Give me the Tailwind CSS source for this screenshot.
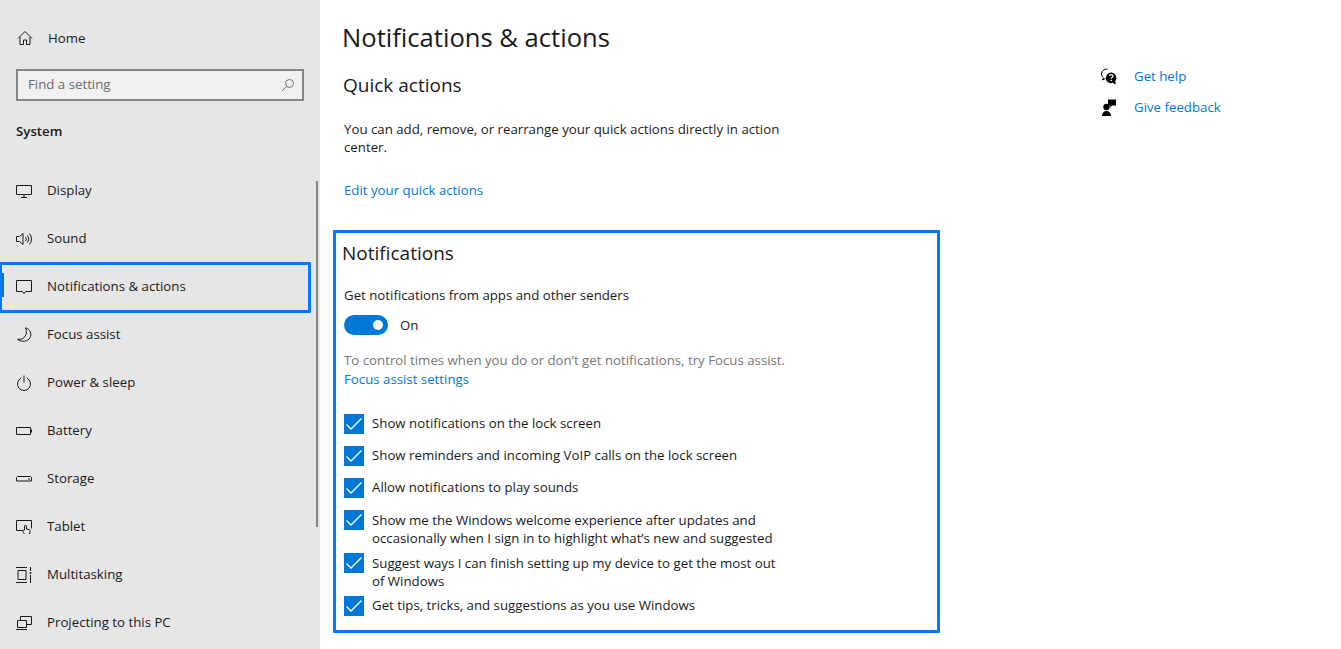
<!DOCTYPE html>
<html lang="en">
<head>
    <meta charset="UTF-8">
    <title>Settings</title>
    <script src="https://cdn.jsdelivr.net/npm/@tailwindcss/browser@4"></script>
</head>
<body class="bg-white text-[#1a1a1a] font-['Open_Sans',sans-serif] text-[13.25px] overflow-hidden">
<div class="flex h-[649px] w-[1341px] overflow-hidden">
    <!-- sidebar -->
    <aside class="relative w-[320px] shrink-0 bg-[#e6e6e6] h-[649px] overflow-hidden">
        <div class="h-[24px] mt-[26px] pl-[17px] flex items-center gap-[15px]">
            <svg class="w-[16px] h-[16px]" viewBox="0 0 16 16" fill="none" stroke="#1a1a1a"><path d="M1 8.500 8 1.500l7 7M3 7v7.500h3.500V10h3v4.500H13V7"/></svg>
            <span class="mt-[1px]">Home</span>
        </div>
        <div class="mx-[16px] mt-[19px] h-[32px] border-2 border-[#858585] bg-[#f0f0f0] flex items-center justify-between pl-[10px] pr-[7px] text-[#6d6d6d]">
            <span>Find a setting</span>
            <svg class="w-[14px] h-[14px]" viewBox="0 0 14 14" fill="none" stroke="#767676"><circle cx="8.500" cy="5.500" r="4"/><path d="M5.500 8.500 1 13"/></svg>
        </div>
        <div class="mt-[20px] pl-[16px] h-[20px] leading-[20px] font-semibold text-[#1a1a1a]">System</div>
        <nav class="mt-[26px] flex flex-col">
            <a class="h-[48px] flex items-center pl-[16px] gap-[15px]">
                <svg class="w-[16px] h-[16px]" viewBox="0 0 16 16" fill="none" stroke="#1a1a1a"><path d="M.5 2.500h15v9H.5zM8 11.500v3M5 14.500h6"/></svg>
                <span>Display</span>
            </a>
            <a class="h-[48px] flex items-center pl-[16px] gap-[15px]">
                <svg class="w-[16px] h-[16px]" viewBox="0 0 16 16" fill="none" stroke="#1a1a1a"><path d="M.5 5.500h3l3.500-3v11l-3.500-3h-3zM9.500 6a3 3 0 0 1 0 4M11.500 4.500a5.500 5.500 0 0 1 0 7M13.500 2.500a8.500 8.500 0 0 1 0 11"/></svg>
                <span>Sound</span>
            </a>
            <a class="relative h-[51px] -my-[1.500px] -ml-[1px] mr-[9px] border-[3px] border-[#0078ff] flex items-center pl-[14px] gap-[15px] rounded-[1px]">
                <span class="absolute left-0 top-[8px] w-[2px] h-[24px] bg-[#0078d7]"></span>
                <svg class="w-[16px] h-[16px]" viewBox="0 0 16 16" fill="none" stroke="#1a1a1a"><path d="M.5 1.500h15v11H9.500L8 14.500 6.500 12.500h-6z"/></svg>
                <span>Notifications &amp; actions</span>
            </a>
            <a class="h-[48px] flex items-center pl-[16px] gap-[15px]">
                <svg class="w-[16px] h-[16px]" viewBox="0 0 16 16" fill="none" stroke="#1a1a1a"><path d="M9.500.8c5 1.500 6.500 6.500 4.500 10s-8 5-12.500 1.500c4 .5 7-1 8.300-4.300.9-2.500.7-5-.3-7.200z"/></svg>
                <span>Focus assist</span>
            </a>
            <a class="h-[48px] flex items-center pl-[16px] gap-[15px]">
                <svg class="w-[16px] h-[16px]" viewBox="0 0 16 16" fill="none" stroke="#1a1a1a"><path d="M5 3.200a6.500 6.500 0 1 0 6 0M8 .5v7"/></svg>
                <span>Power &amp; sleep</span>
            </a>
            <a class="h-[48px] flex items-center pl-[16px] gap-[15px]">
                <svg class="w-[16px] h-[16px]" viewBox="0 0 16 16" fill="none" stroke="#1a1a1a"><path d="M.5 4.500h14v7H.5zM15.500 6.500v3"/></svg>
                <span>Battery</span>
            </a>
            <a class="h-[48px] flex items-center pl-[16px] gap-[15px]">
                <svg class="w-[16px] h-[16px]" viewBox="0 0 16 16" fill="none" stroke="#1a1a1a"><path d="M1.500 5.500h13l1 1v3.500H.5V6.500zM12 8h2"/></svg>
                <span>Storage</span>
            </a>
            <a class="h-[48px] flex items-center pl-[16px] gap-[15px]">
                <svg class="w-[16px] h-[16px]" viewBox="0 0 16 16" fill="none" stroke="#1a1a1a"><path d="M7 11.500H.5v-10h15v8M8.500 15c-1-1-1.500-2-1.500-3 0-1 1-1.500 1.500-1V7c0-1 2-1 2 0v3l2.500.5c1 .2 1.500 1 1 2.500l-.7 2"/></svg>
                <span>Tablet</span>
            </a>
            <a class="h-[48px] flex items-center pl-[16px] gap-[15px]">
                <svg class="w-[16px] h-[16px]" viewBox="0 0 16 16" fill="none" stroke="#1a1a1a"><path d="M0 .5h11M0 15.500h11M2 3.500h8v9H2zM14.500 0v4M14.500 8v8"/><circle cx="14.500" cy="6" r="1" fill="#1a1a1a" stroke="none"/></svg>
                <span>Multitasking</span>
            </a>
            <a class="h-[48px] flex items-center pl-[16px] gap-[15px]">
                <svg class="w-[16px] h-[16px]" viewBox="0 0 16 16" fill="none" stroke="#1a1a1a"><path d="M4.500 5V1.500h11v8H11M1.500 5.500h9v7h-9zM0 14.500h11"/></svg>
                <span>Projecting to this PC</span>
            </a>
        </nav>
        <div class="absolute left-[316px] top-[181px] w-[2px] h-[346px] bg-[#858585]"></div>
    </aside>

    <!-- main column -->
    <main class="w-[620px] shrink-0 pl-[13px]">
        <div class="pl-[9px]">
            <h1 class="mt-[18px] h-[40px] leading-[40px] text-[25.6px] text-[#1a1a1a]">Notifications &amp; actions</h1>
            <h2 class="mt-[13px] h-[28px] leading-[28px] text-[19px] pl-[1px]">Quick actions</h2>
            <p class="mt-[21px] pl-[2px] w-[450px] leading-[18px]">You can add, remove, or rearrange your quick actions directly in action center.</p>
            <a class="block mt-[24px] pl-[2px] leading-[20px] text-[#0078d7]">Edit your quick actions</a>
        </div>
        <section class="mt-[30px] w-[607px] h-[403px] border-[3px] border-[#0078ff] pl-[6px] rounded-[1px]">
            <h2 class="mt-[6px] h-[28px] leading-[28px] text-[19px]">Notifications</h2>
            <p class="mt-[18px] pl-[2px] leading-[20px]">Get notifications from apps and other senders</p>
            <div class="mt-[10px] pl-[2px] flex items-center gap-[12px] h-[20px]">
                <span class="w-[44px] h-[20px] rounded-full bg-[#0078d7] flex items-center justify-end pr-[5px]"><span class="w-[10px] h-[10px] rounded-full bg-white"></span></span>
                <span class="mt-[1px]">On</span>
            </div>
            <p class="mt-[16px] pl-[2px] leading-[19px] text-[#767676]">To control times when you do or don’t get notifications, try Focus assist.</p>
            <a class="block pl-[2px] leading-[19px] text-[#0078d7]">Focus assist settings</a>
            <ul class="mt-[19px] pl-[2px] flex flex-col">
                <li class="h-[32px] flex items-center gap-[8px]"><svg class="w-[20px] h-[20px] shrink-0 bg-[#0078d7]" viewBox="0 0 20 20" fill="none" stroke="#fff" stroke-width="1.300"><path d="M2.500 10.500 7 15l10.500-10.500"/></svg><span>Show notifications on the lock screen</span></li>
                <li class="h-[32px] flex items-center gap-[8px]"><svg class="w-[20px] h-[20px] shrink-0 bg-[#0078d7]" viewBox="0 0 20 20" fill="none" stroke="#fff" stroke-width="1.300"><path d="M2.500 10.500 7 15l10.500-10.500"/></svg><span>Show reminders and incoming VoIP calls on the lock screen</span></li>
                <li class="h-[32px] flex items-center gap-[8px]"><svg class="w-[20px] h-[20px] shrink-0 bg-[#0078d7]" viewBox="0 0 20 20" fill="none" stroke="#fff" stroke-width="1.300"><path d="M2.500 10.500 7 15l10.500-10.500"/></svg><span>Allow notifications to play sounds</span></li>
                <li class="h-[49px] flex items-start gap-[8px] pt-[6px]"><svg class="w-[20px] h-[20px] shrink-0 bg-[#0078d7]" viewBox="0 0 20 20" fill="none" stroke="#fff" stroke-width="1.300"><path d="M2.500 10.500 7 15l10.500-10.500"/></svg><span class="w-[430px] mt-[1px] leading-[18px]">Show me the Windows welcome experience after updates and occasionally when I sign in to highlight what’s new and suggested</span></li>
                <li class="h-[43px] flex items-start gap-[8px]"><svg class="w-[20px] h-[20px] shrink-0 bg-[#0078d7]" viewBox="0 0 20 20" fill="none" stroke="#fff" stroke-width="1.300"><path d="M2.500 10.500 7 15l10.500-10.500"/></svg><span class="w-[415px] mt-[1px] leading-[18px]">Suggest ways I can finish setting up my device to get the most out of Windows</span></li>
                <li class="h-[20px] flex items-center gap-[8px]"><svg class="w-[20px] h-[20px] shrink-0 bg-[#0078d7]" viewBox="0 0 20 20" fill="none" stroke="#fff" stroke-width="1.300"><path d="M2.500 10.500 7 15l10.500-10.500"/></svg><span>Get tips, tricks, and suggestions as you use Windows</span></li>
            </ul>
        </section>
    </main>

    <!-- help links -->
    <div class="ml-[161px] pt-[61px] flex flex-col">
        <a class="h-[31px] flex items-center gap-[15px] text-[#0078d7]">
            <svg class="w-[18px] h-[18px]" viewBox="0 0 18 18"><path d="M6.500 1C3 1 .5 3.200.5 6c0 1.600.8 2.900 2 3.800L1.500 12l3-1.500" fill="none" stroke="#000"/><path d="M10.500 4.500a5.500 5.500 0 0 0-3.500 9.800c1.500 1 3.200 1 4.500.5l3.500 1.700-.8-3.200a5.500 5.500 0 0 0-3.700-8.800z" fill="#000"/><path d="M8.500 8c.2-1.800 3.500-1.800 3.500 0 0 1.300-1.700 1.200-1.700 2.700" fill="none" stroke="#fff" stroke-width="1.200"/><circle cx="10.300" cy="12.500" r=".8" fill="#fff"/></svg>
            <span>Get help</span>
        </a>
        <a class="h-[31px] flex items-center gap-[15px] text-[#0078d7]">
            <svg class="w-[18px] h-[18px]" viewBox="0 0 18 18" fill="#000"><path d="M7 .5h8v6h-4l-2 2v-2H7z"/><circle cx="5.500" cy="8" r="3.200"/><path d="M1 17c0-3 1.800-5 4.500-5s4.500 2 4.500 5z"/></svg>
            <span>Give feedback</span>
        </a>
    </div>
</div>
</body>
</html>
